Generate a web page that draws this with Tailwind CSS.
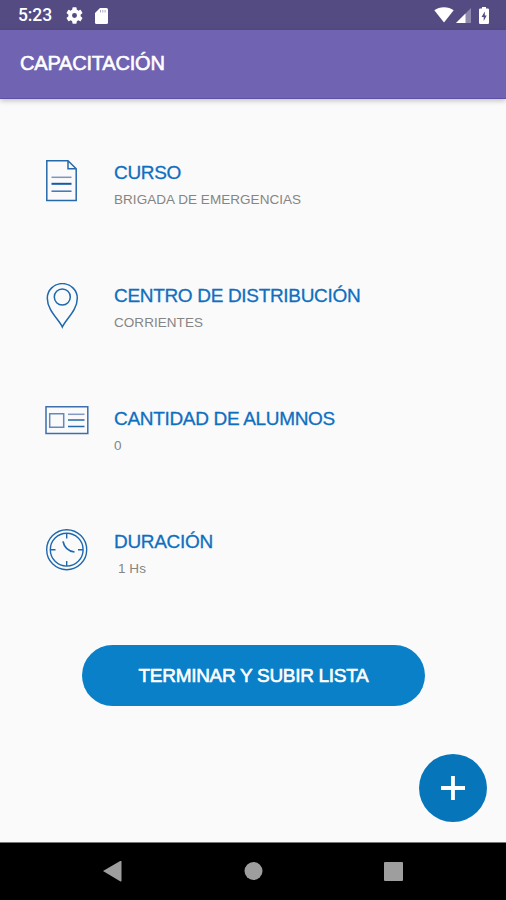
<!DOCTYPE html>
<html lang="es">
<head>
    <meta charset="UTF-8">
    <meta name="viewport" content="width=device-width, initial-scale=1.0">
    <title>Capacitación</title>
    <script src="https://cdn.jsdelivr.net/npm/@tailwindcss/browser@4"></script>
</head>
<body class="bg-[#fafafa] font-['Liberation_Sans',Arial,sans-serif]">
    <div class="w-[506px] h-[900px] flex flex-col overflow-hidden">

        <!-- Status bar -->
        <div class="h-[30px] shrink-0 bg-[#544b82] flex items-center pl-[18px] pr-4 text-white">
            <span class="w-[48px] text-[17.5px] leading-none font-medium font-[Roboto,sans-serif] tracking-[-0.1px] pt-[2px]">5:23</span>
            <svg class="w-[17px] h-[17px] mt-px" viewBox="2 2 20 20" fill="currentColor">
                <path d="M19.14 12.94c.04-.3.06-.61.06-.94s-.02-.64-.07-.94l2.03-1.58a.49.49 0 0 0 .12-.61l-1.92-3.32a.49.49 0 0 0-.59-.22l-2.39.96a7 7 0 0 0-1.62-.94l-.36-2.54a.48.48 0 0 0-.48-.41h-3.84a.47.47 0 0 0-.47.41l-.36 2.54c-.59.24-1.13.57-1.62.94l-2.39-.96a.48.48 0 0 0-.59.22L2.74 8.87a.48.48 0 0 0 .12.61l2.03 1.58c-.05.3-.09.63-.09.94s.02.64.07.94l-2.03 1.58a.49.49 0 0 0-.12.61l1.92 3.32c.12.22.37.29.59.22l2.39-.96c.5.38 1.03.7 1.62.94l.36 2.54c.05.24.24.41.48.41h3.84c.24 0 .44-.17.47-.41l.36-2.54c.59-.24 1.13-.56 1.62-.94l2.39.96c.22.08.47 0 .59-.22l1.92-3.32a.48.48 0 0 0-.12-.61zM12 14.9a2.9 2.9 0 1 1 0-5.8 2.9 2.9 0 0 1 0 5.8z"/>
            </svg>
            <svg class="w-[13px] h-[16px] ml-[12px] mt-px" viewBox="0 0 13 16">
                <path d="M5 0h6.500a1.500 1.500 0 0 1 1.500 1.500v13a1.500 1.500 0 0 1-1.500 1.500h-10A1.500 1.500 0 0 1 0 14.500V5z" fill="#fff"/>
                <path d="M5.500 2v2.500M7.800 2v2.500M10.100 2v2.500" stroke="#aaa5c4" stroke-width="1"/>
            </svg>
            <div class="ml-auto flex items-center">
                <svg class="w-[20px] h-[16px]" viewBox="0 0 20 16" fill="currentColor">
                    <path d="M10 15.500 .3 3.200C3 1.300 6.200 .2 10 .2s7 1.100 9.700 3z"/>
                </svg>
                <svg class="w-[15px] h-[15px] ml-[2px] mt-px" viewBox="0 0 15 15">
                    <path d="M0 15 15 0v15z" fill="#fff" fill-opacity=".35"/>
                    <path d="M0 15 9.500 5.500V15z" fill="#fff"/>
                </svg>
                <svg class="w-[10px] h-[17px] ml-[8px] mr-px" viewBox="0 0 10 17">
                    <path d="M3 0h4v1.600h1.800A1.200 1.200 0 0 1 10 2.800v13a1.200 1.200 0 0 1-1.200 1.200H1.200A1.200 1.200 0 0 1 0 15.800v-13a1.200 1.200 0 0 1 1.200-1.200H3z" fill="#fff"/>
                    <path d="M5.800 4.500 2.500 10h2.200v4L7.700 8.500H5.800z" fill="#544b82"/>
                </svg>
            </div>
        </div>

        <!-- App bar -->
        <header class="h-[69px] shrink-0 bg-[#7063b1] border-b border-[#5f4fa5] shadow-[0_2px_5px_rgba(0,0,0,0.22)] flex items-center pl-[20px] pb-[2px]">
            <h1 class="text-[20px] leading-none tracking-[-0.2px] text-white [-webkit-text-stroke:0.6px_#fff]">CAPACITACIÓN</h1>
        </header>

        <main class="flex-1 flex flex-col pt-[61px]">
            <section class="h-[123px] flex pl-[45px]">
                <div class="w-[69px]">
                    <svg class="w-[34px] h-[42px]" viewBox="0 0 34 42" fill="none" stroke="#2669aa" stroke-width="1.500">
                        <path d="M1.800 .8H23l8.200 8V40.600H1.800zM23 .8v8h8.200"/>
                        <path d="M6.500 17.300h20" stroke="#7d93c2"/>
                        <path d="M6.500 23.800h20" stroke="#1659a6" stroke-width="2"/>
                        <path d="M6.500 31.200h20" stroke="#3b74b3"/>
                    </svg>
                </div>
                <div class="pt-[3px]">
                    <h2 class="text-[19px] leading-[20px] tracking-[-0.32px] text-[#0f6fbf] [-webkit-text-stroke:0.3px_#0f6fbf]">CURSO</h2>
                    <p class="mt-[9px] text-[13.500px] leading-[16px] tracking-[0.05px] text-[#858585]">BRIGADA DE EMERGENCIAS</p>
                </div>
            </section>

            <section class="h-[123px] flex pl-[45px]">
                <div class="w-[69px]">
                    <svg class="w-[34px] h-[46px]" viewBox="0 0 34 46" fill="none" stroke="#1f68ae" stroke-width="1.500">
                        <path d="M17.300 44C14 36.500 2.300 27.500 2.300 15.200a15 14.600 0 0 1 30 0C32.300 27.500 20.500 36.500 17.300 44z"/>
                        <circle cx="17.300" cy="14" r="8"/>
                    </svg>
                </div>
                <div class="pt-[3px]">
                    <h2 class="text-[19px] leading-[20px] tracking-[-0.32px] text-[#0f6fbf] [-webkit-text-stroke:0.3px_#0f6fbf]">CENTRO DE DISTRIBUCIÓN</h2>
                    <p class="mt-[9px] text-[13.500px] leading-[16px] tracking-[0.05px] text-[#858585]">CORRIENTES</p>
                </div>
            </section>

            <section class="h-[123px] flex pl-[45px]">
                <div class="w-[69px]">
                    <svg class="w-[44px] h-[29px]" viewBox="0 0 44 29" fill="none" stroke="#2669aa" stroke-width="1.500">
                        <path d="M1 .8h41.800v26.700H1z" stroke="#3c6fae"/>
                        <path d="M4.700 7.800h14v13.400h-14z" stroke="#6189be"/>
                        <path d="M23 8.300h16.500" stroke="#8399c6"/>
                        <path d="M23 14h16.500M23 20.600h16.500"/>
                    </svg>
                </div>
                <div class="pt-[3px]">
                    <h2 class="text-[19px] leading-[20px] tracking-[-0.32px] text-[#0f6fbf] [-webkit-text-stroke:0.3px_#0f6fbf]">CANTIDAD DE ALUMNOS</h2>
                    <p class="mt-[9px] text-[13.500px] leading-[16px] tracking-[0.05px] text-[#858585]">0</p>
                </div>
            </section>

            <section class="h-[116px] flex pl-[45px]">
                <div class="w-[69px]">
                    <svg class="w-[44px] h-[42px]" viewBox="0 0 44 42" fill="none" stroke="#1f68ae" stroke-width="1.400">
                        <circle cx="21.700" cy="20.700" r="20"/>
                        <circle cx="21.700" cy="20.700" r="16.400"/>
                        <path d="M21.700 4.500v5M21.700 32v5M5.500 20.700h5M33 20.700h5"/>
                        <path d="M18 12.300c1 5 4 9.500 11.500 10.700" stroke-width="1.700"/>
                    </svg>
                </div>
                <div class="pt-[3px]">
                    <h2 class="text-[19px] leading-[20px] tracking-[-0.32px] text-[#0f6fbf] [-webkit-text-stroke:0.3px_#0f6fbf]">DURACIÓN</h2>
                    <p class="mt-[9px] pl-[4px] text-[13.500px] leading-[16px] tracking-[0.05px] text-[#858585]">1 Hs</p>
                </div>
            </section>

            <button class="w-[343px] h-[61px] ml-[82px] pb-px rounded-full bg-[#0a80c8] text-white text-[19px] leading-none tracking-[-0.3px] [-webkit-text-stroke:0.6px_#fff]">TERMINAR Y SUBIR LISTA</button>

            <button class="mt-[48px] ml-[419px] w-[68px] h-[68px] rounded-full bg-[#0675ba] flex items-center justify-center">
                <svg class="w-[24px] h-[24px]" viewBox="0 0 24 24" stroke="#fff" stroke-width="3.800">
                    <path d="M12 0v24M0 12h24"/>
                </svg>
            </button>
        </main>

        <!-- Navigation bar -->
        <nav class="h-[58px] shrink-0 bg-black border-t border-[#777] flex justify-between pl-[103px] pr-[103px] pt-[18px] text-[#9e9e9e]">
            <svg class="w-[19px] h-[21px]" viewBox="0 0 19 21" fill="currentColor"><path d="M0 10 17.500 -.2c.5-.2 1 0 1 .6v19.400c0 .6-.5.800-1 .6z"/></svg>
            <svg class="w-[19px] h-[21px]" viewBox="0 0 19 21" fill="currentColor"><circle cx="9.500" cy="10" r="9"/></svg>
            <svg class="w-[19px] h-[21px]" viewBox="0 0 19 21" fill="currentColor"><rect y="1" width="19" height="19" rx="1"/></svg>
        </nav>
    </div>
</body>
</html>
